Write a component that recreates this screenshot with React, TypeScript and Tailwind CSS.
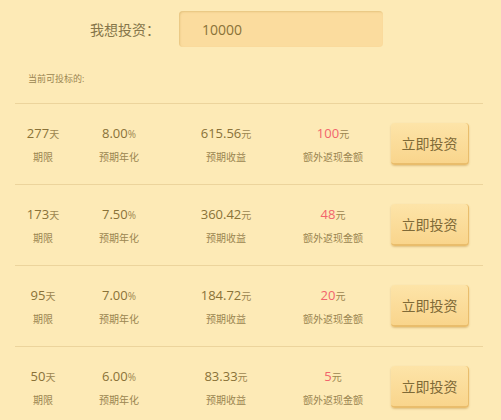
const font = { fontFamily: '"Open Sans","Noto Sans CJK SC",sans-serif' }

interface Plan {
  days: number
  rate: string
  income: string
  bonus: number
}

const plans: Plan[] = [
  { days: 277, rate: '8.00', income: '615.56', bonus: 100 },
  { days: 173, rate: '7.50', income: '360.42', bonus: 48 },
  { days: 95, rate: '7.00', income: '184.72', bonus: 20 },
  { days: 50, rate: '6.00', income: '83.33', bonus: 5 },
]

function Cell({ value, unit, label, width, red }: { value: string | number; unit: string; label: string; width: string; red?: boolean }) {
  return (
    <div className={`${width} flex flex-col items-center`}>
      <div className="flex items-baseline leading-none">
        <span className={`text-[13px] ${red ? 'text-[#f2656c]' : 'text-[#8a7238]'}`}>{value}</span>
        <span className="text-[10px] text-[#9c8650]">{unit}</span>
      </div>
      <div className="mt-[12px] text-[10px] leading-none text-[#9a8550]">{label}</div>
    </div>
  )
}

export default function App() {
  return (
    <div className="w-[501px] h-[420px] overflow-hidden bg-[#fdeab6]" style={font}>
      {/* Amount input */}
      <div className="flex items-center pt-[11px]">
        <div className="w-[179px] pl-[90px] text-[14px] text-[#86764a]">我想投资：</div>
        <div className="w-[204px] h-[36px] rounded-[4px] bg-[#fbdc9e] shadow-[inset_1px_1px_2px_rgba(190,150,70,0.35)] flex items-center pl-[23px] text-[14px] text-[#8a7238]">
          10000
        </div>
      </div>

      <div className="pl-[28px] mt-[27px] text-[9px] leading-none text-[#9a8550]">当前可投标的:</div>

      {/* Plan list */}
      <div className="ml-[15px] mr-[18px] mt-[20px]">
        {plans.map(p => (
          <div key={p.days} className="h-[81px] border-t border-[#ecd49c] flex items-center">
            <Cell width="w-[56px]" value={p.days} unit="天" label="期限" />
            <Cell width="w-[96px]" value={p.rate} unit="%" label="预期年化" />
            <Cell width="w-[118px]" value={p.income} unit="元" label="预期收益" />
            <Cell width="w-[96px]" value={p.bonus} unit="元" label="额外返现金额" red />
            <button className="ml-[10px] w-[78px] h-[42px] rounded-[4px] bg-gradient-to-b from-[#fde4a8] to-[#f9d58c] border-b-2 border-r border-[#e9bd6c] shadow-[0_1px_2px_rgba(180,130,50,0.4)] text-[14px] text-[#7f6a37]">
              立即投资
            </button>
          </div>
        ))}
      </div>
    </div>
  )
}
